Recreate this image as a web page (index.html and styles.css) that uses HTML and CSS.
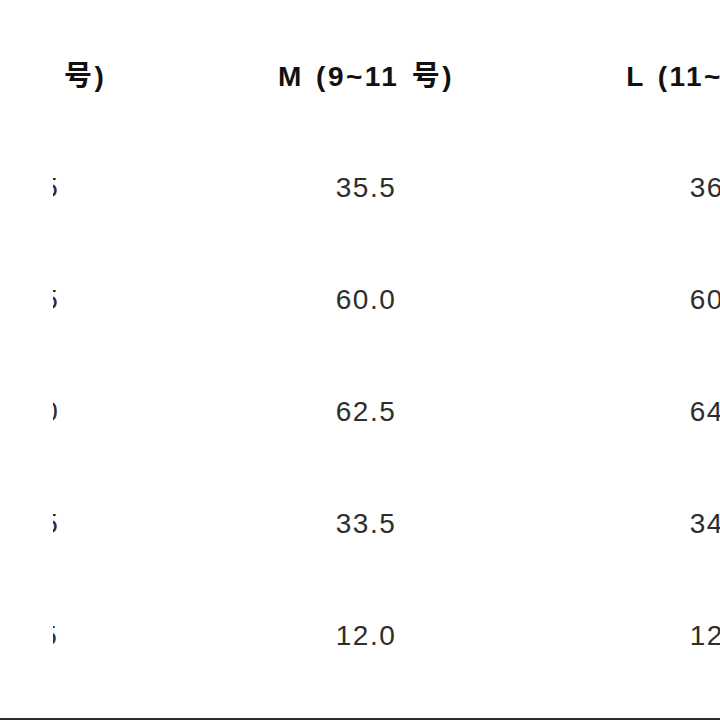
FILE: index.html
```html
<!DOCTYPE html>
<html lang="zh">
<head>
<meta charset="utf-8">
<title>Size table</title>
<link rel="stylesheet" href="styles.css">
</head>
<body>
<div class="page">
  <div class="clip">
    <div class="table">
      <div class="row head">
        <div class="cell">S (7~9 号)</div>
        <div class="cell">M (9~11 号)</div>
        <div class="cell">L (11~13 号)</div>
      </div>
      <div class="row">
        <div class="cell">34.5</div>
        <div class="cell">35.5</div>
        <div class="cell">36.5</div>
      </div>
      <div class="row">
        <div class="cell">59.5</div>
        <div class="cell">60.0</div>
        <div class="cell">60.5</div>
      </div>
      <div class="row">
        <div class="cell">61.0</div>
        <div class="cell">62.5</div>
        <div class="cell">64.0</div>
      </div>
      <div class="row">
        <div class="cell">32.5</div>
        <div class="cell">33.5</div>
        <div class="cell">34.5</div>
      </div>
      <div class="row">
        <div class="cell">11.5</div>
        <div class="cell">12.0</div>
        <div class="cell">12.5</div>
      </div>
    </div>
  </div>
  <div class="rule"></div>
</div>
</body>
</html>
```

FILE: styles.css
```css
html, body {
  margin: 0;
  padding: 0;
  background: #ffffff;
  width: 720px;
  height: 720px;
  overflow: hidden;
}

.page {
  width: 720px;
  height: 720px;
  overflow: hidden;
  display: flex;
  flex-direction: column;
  font-family: "Liberation Sans", "Noto Sans CJK SC", sans-serif;
  color: #2e2e2e;
}

.clip {
  margin-top: 22px;
  margin-left: 53px;
  overflow: hidden;
  flex: none;
}

.table {
  margin-left: -199px;
  display: flex;
  flex-direction: column;
}

.row {
  display: grid;
  grid-template-columns: 350px 324px 384px;
  height: 112px;
}

.row.head {
  height: 110px;
}

.cell {
  display: flex;
  align-items: center;
  justify-content: center;
  white-space: nowrap;
  font-size: 28px;
  letter-spacing: 1.5px;
  line-height: 1;
}

.head .cell {
  font-weight: bold;
  color: #111111;
  letter-spacing: 2.5px;
  word-spacing: 2px;
}

.rule {
  margin-top: 26px;
  height: 2px;
  background: #2b2b2b;
  flex: none;
}
```
